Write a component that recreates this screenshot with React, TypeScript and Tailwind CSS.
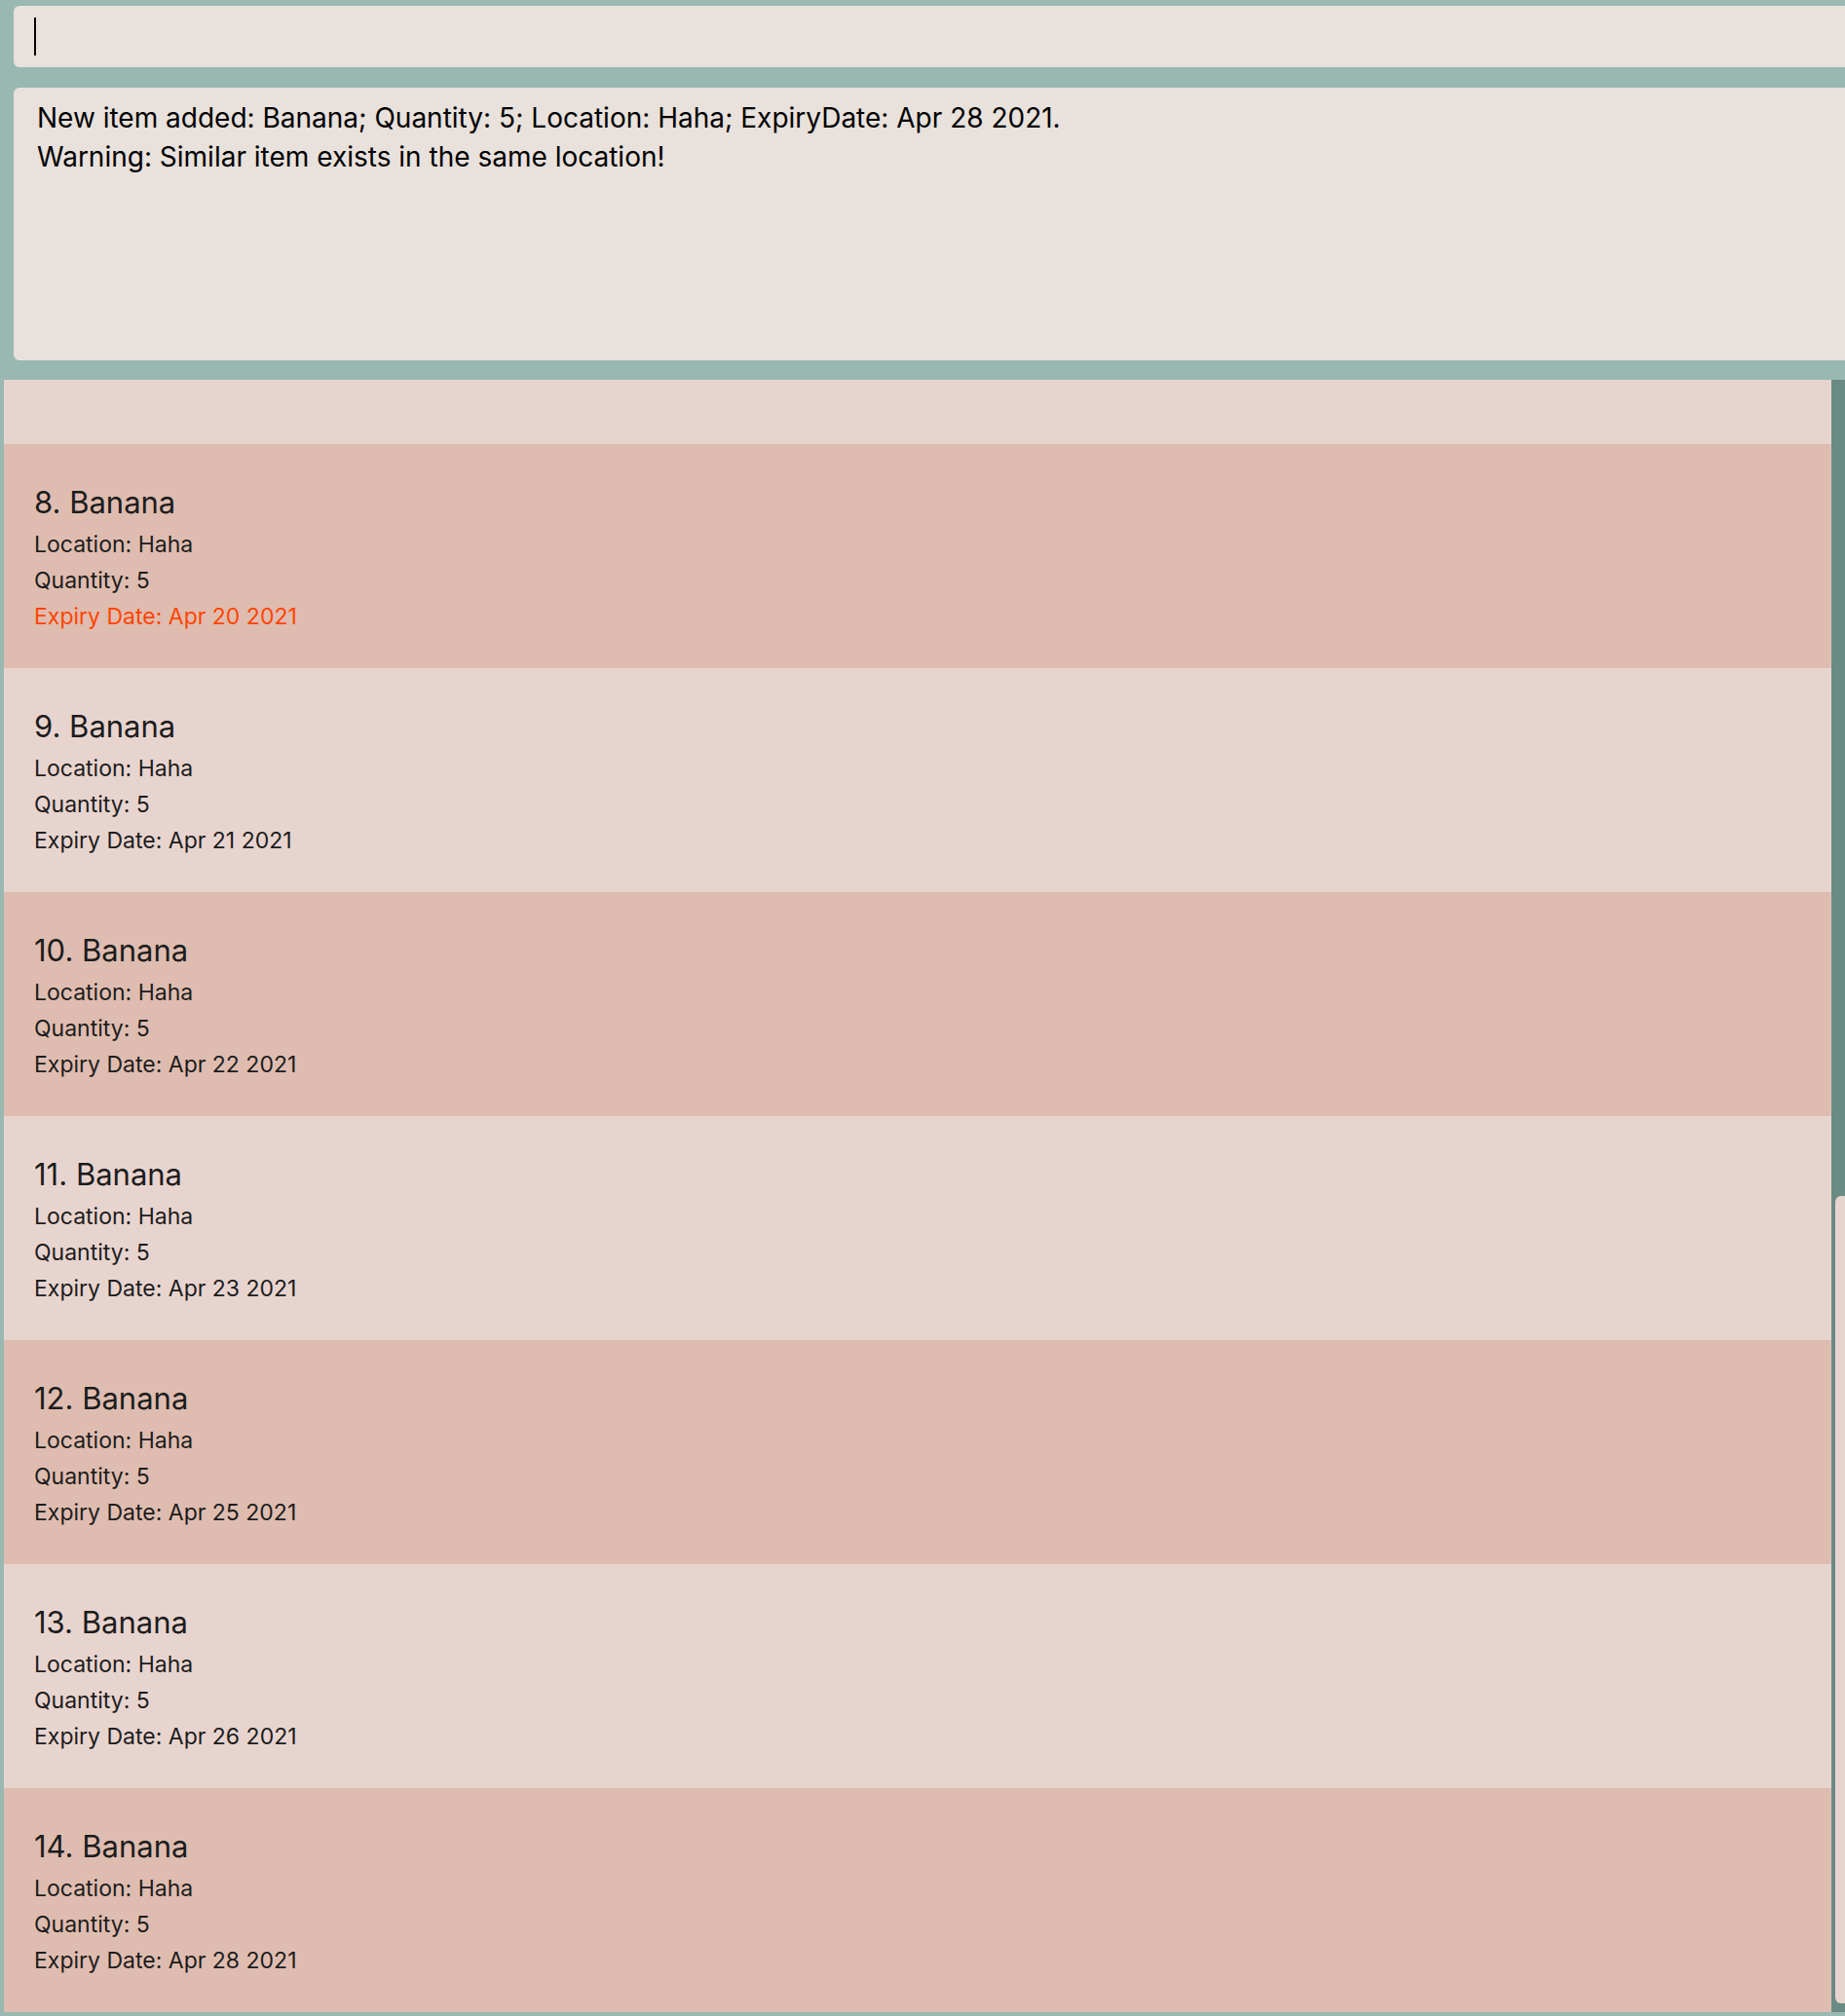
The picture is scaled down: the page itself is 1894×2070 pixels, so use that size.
const items = [
  { n: 8, date: 'Apr 20 2021', expired: true },
  { n: 9, date: 'Apr 21 2021' },
  { n: 10, date: 'Apr 22 2021' },
  { n: 11, date: 'Apr 23 2021' },
  { n: 12, date: 'Apr 25 2021' },
  { n: 13, date: 'Apr 26 2021' },
  { n: 14, date: 'Apr 28 2021' },
]

function ItemCard({ n, date, expired, dark }: { n: number; date: string; expired?: boolean; dark: boolean }) {
  return (
    <div className={`h-[230px] shrink-0 pl-[31px] pt-[40px] text-[#1c1c1c] ${dark ? 'bg-[#dfbcb0]' : 'bg-[#e8d4cf]'}`}>
      {/* Header */}
      <div className="text-[31px] leading-[40px]">
        <span>{n}. </span>
        <span>Banana</span>
      </div>
      {/* Details */}
      <div className="mt-[5px] text-[23px] leading-[37px]">
        <div>Location: Haha</div>
        <div>Quantity: 5</div>
        <div className={expired ? 'text-[#ff4500]' : ''}>Expiry Date: {date}</div>
      </div>
    </div>
  )
}

export default function App() {
  return (
    <div
      className="w-[1894px] h-[2070px] overflow-hidden bg-[#9ab8b2] flex flex-col pt-[6px]"
      style={{ fontFamily: 'Inter, "Noto Sans", sans-serif' }}
    >
      {/* Command box */}
      <div className="ml-[14px] mr-[-10px] h-[63px] shrink-0 rounded-[6px] bg-[#e8e1dc] pl-[21px] pt-[12px]">
        <div className="w-[2px] h-[39px] bg-black" />
      </div>

      {/* Result display */}
      <div className="ml-[14px] mr-[-10px] mt-[21px] h-[280px] shrink-0 rounded-[6px] bg-[#e8e1dc] pl-[24px] pt-[11px] text-[28px] leading-[40px] text-black">
        <div>New item added: Banana; Quantity: 5; Location: Haha; ExpiryDate: Apr 28 2021.</div>
        <div>Warning: Similar item exists in the same location!</div>
      </div>

      {/* Item list */}
      <div className="ml-[4px] mt-[20px] h-[1676px] shrink-0 flex">
        <div className="flex-1 flex flex-col overflow-hidden">
          <div className="h-[66px] shrink-0 bg-[#e8d4cf]" />
          {items.map((it, i) => (
            <ItemCard key={it.n} n={it.n} date={it.date} expired={it.expired} dark={i % 2 === 0} />
          ))}
        </div>
        <div className="w-[14px] shrink-0 bg-[#6a8a84] flex flex-col pl-[4px]">
          <div className="h-[838px] shrink-0" />
          <div className="h-[829px] shrink-0 rounded-l-[6px] bg-[#e8d4cf]" />
        </div>
      </div>
    </div>
  )
}
